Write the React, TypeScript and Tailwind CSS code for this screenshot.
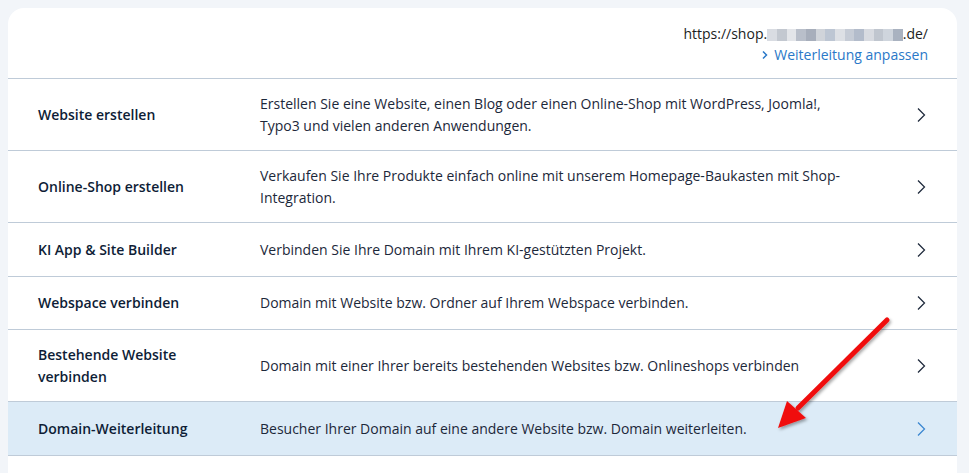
import React from "react";

const rows = [
  {
    title: "Website erstellen",
    text: "Erstellen Sie eine Website, einen Blog oder einen Online-Shop mit WordPress, Joomla!, Typo3 und vielen anderen Anwendungen.",
  },
  {
    title: "Online-Shop erstellen",
    text: "Verkaufen Sie Ihre Produkte einfach online mit unserem Homepage-Baukasten mit Shop-Integration.",
  },
  {
    title: "KI App & Site Builder",
    text: "Verbinden Sie Ihre Domain mit Ihrem KI-gestützten Projekt.",
  },
  {
    title: "Webspace verbinden",
    text: "Domain mit Website bzw. Ordner auf Ihrem Webspace verbinden.",
  },
  {
    title: "Bestehende Website verbinden",
    text: "Domain mit einer Ihrer bereits bestehenden Websites bzw. Onlineshops verbinden",
  },
  {
    title: "Domain-Weiterleitung",
    text: "Besucher Ihrer Domain auf eine andere Website bzw. Domain weiterleiten.",
    active: true,
  },
];

// pixelated (blurred) part of the domain
const blur = [
  "bg-[#d9dce2]",
  "bg-[#c3c8d0]",
  "bg-[#e3e5e9]",
  "bg-[#b9bfca]",
  "bg-[#a7aebb]",
  "bg-[#d0d4da]",
  "bg-[#bdc6d3]",
  "bg-[#dde0e5]",
  "bg-[#c6ccd6]",
  "bg-[#b3bccb]",
  "bg-[#d8dbe1]",
  "bg-[#c0c6cf]",
  "bg-[#cfd5dd]",
  "bg-[#a9b2c0]",
];

const Chevron = ({ active }: { active?: boolean }) => (
  <svg width="10" height="16" viewBox="0 0 10 16" fill="none">
    <path
      d="M2 1.5 L8.5 8 L2 14.5"
      stroke={active ? "#3a86d1" : "#1f2a3c"}
      strokeWidth="1.25"
    />
  </svg>
);

const App = () => {
  return (
    <div
      className="relative w-[969px] h-[473px] overflow-hidden bg-[#f2f5f9] pt-[8px] pl-[8px]"
      style={{ fontFamily: '"Open Sans", "Liberation Sans", sans-serif' }}
    >
      <div className="w-[949px] h-[470px] bg-white rounded-t-[16px]">
        {/* header */}
        <div className="flex flex-col items-end pt-[15px] pb-[13px] pr-[29px] border-b border-[#bfcbd8] text-[14px] leading-[21px]">
          <div className="flex items-center text-[#1b1d22]">
            <span>https://shop.</span>
            <span className="flex h-[12px] mt-[3px]">
              {blur.map((c, i) => (
                <span key={i} className={`w-[9.7px] h-full ${c}`} />
              ))}
            </span>
            <span>.de/</span>
          </div>
          <div className="flex items-center gap-[6px] text-[#2a78c8]">
            <svg width="6" height="10" viewBox="0 0 6 10" fill="none">
              <path d="M1 1.5 L4.5 5 L1 8.5" stroke="#2a78c8" strokeWidth="1.5" />
            </svg>
            <span>Weiterleitung anpassen</span>
          </div>
        </div>

        {/* rows */}
        {rows.map((r, i) => (
          <div
            key={i}
            className={`flex items-center min-h-[53.5px] pt-[14px] pb-[13px] pl-[30px] border-b border-[#bfcbd8] text-[14px] leading-[22px] ${
              r.active ? "bg-[#dcebf7]" : ""
            }`}
          >
            <div className="w-[222px] pr-[40px] font-semibold text-[#0e1d36]">{r.title}</div>
            <div className="flex-1 text-[#1c283a]">{r.text}</div>
            <div className="w-[96px] flex justify-end pr-[31px]">
              <Chevron active={r.active} />
            </div>
          </div>
        ))}
      </div>

      {/* red annotation arrow */}
      <svg
        className="absolute left-0 top-0 pointer-events-none"
        width="969"
        height="473"
        viewBox="0 0 969 473"
      >
        <defs>
          <filter id="sh" x="-20%" y="-20%" width="140%" height="140%">
            <feDropShadow dx="1.5" dy="2" stdDeviation="1.5" floodColor="#000" floodOpacity="0.35" />
          </filter>
        </defs>
        <g filter="url(#sh)">
          <line x1="887" y1="320" x2="798" y2="408" stroke="#f01010" strokeWidth="5" strokeLinecap="round" />
          <polygon points="778,428 787,401 806,418" fill="#f01010" />
        </g>
      </svg>
    </div>
  );
};

export default App;
